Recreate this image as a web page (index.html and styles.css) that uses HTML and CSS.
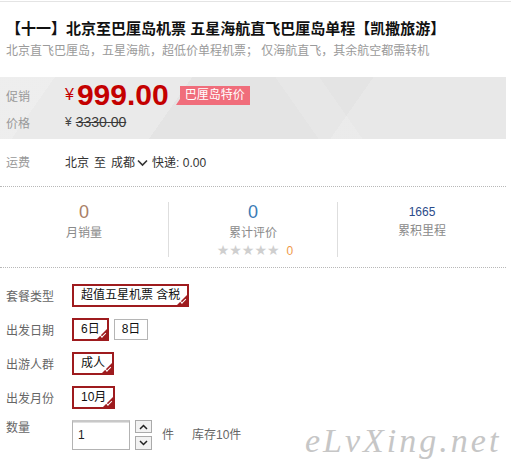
FILE: index.html
```html
<!DOCTYPE html>
<html lang="zh">
<head>
<meta charset="utf-8">
<link rel="stylesheet" href="styles.css">
</head>
<body>
<div class="topline"></div>
<div class="page">
  <h1 class="title">【十一】北京至巴厘岛机票 五星海航直飞巴厘岛单程【凯撒旅游】</h1>
  <p class="sub">北京直飞巴厘岛，五星海航，超低价单程机票； 仅海航直飞，其余航空都需转机</p>

  <div class="pricebox">
    <div class="prow promo">
      <span class="lbl">促销</span>
      <span class="yen">¥</span><span class="big">999.00</span>
      <span class="badge">巴厘岛特价</span>
    </div>
    <div class="prow orig">
      <span class="lbl">价格</span>
      <span class="oyen">¥</span><span class="old">3330.00</span>
    </div>
  </div>

  <div class="ship">
    <span class="lbl">运费</span>
    <span class="city">北京</span><span class="to">至</span><span class="city">成都</span>
    <svg class="chev" width="11" height="8" viewBox="0 0 11 8"><polyline points="1,1.5 5.5,6 10,1.5" fill="none" stroke="#333" stroke-width="1.6"/></svg>
    <span>快递: 0.00</span>
  </div>

  <div class="stats">
    <div class="col">
      <div class="num brown">0</div>
      <div class="slbl">月销量</div>
    </div>
    <div class="col">
      <div class="num blue">0</div>
      <div class="slbl">累计评价</div>
      <div class="stars">★★★★★<span class="zero">0</span></div>
    </div>
    <div class="col">
      <div class="num3">1665</div>
      <div class="slbl3">累积里程</div>
    </div>
  </div>

  <div class="opts">
    <div class="orow">
      <span class="olbl">套餐类型</span>
      <span class="opt sel">超值五星机票 含税</span>
    </div>
    <div class="orow">
      <span class="olbl">出发日期</span>
      <span class="opt sel">6日</span>
      <span class="opt plain">8日</span>
    </div>
    <div class="orow">
      <span class="olbl">出游人群</span>
      <span class="opt sel">成人</span>
    </div>
    <div class="orow">
      <span class="olbl">出发月份</span>
      <span class="opt sel">10月</span>
    </div>
    <div class="qrow">
      <span class="olbl qlbl">数量</span>
      <div class="qinput">1</div>
      <div class="spin">
        <div class="sbtn up"><svg width="9" height="6" viewBox="0 0 9 6"><polyline points="1,5 4.5,1.5 8,5" fill="none" stroke="#222" stroke-width="1.5"/></svg></div>
        <div class="sbtn down"><svg width="9" height="6" viewBox="0 0 9 6"><polyline points="1,1 4.5,4.5 8,1" fill="none" stroke="#222" stroke-width="1.5"/></svg></div>
      </div>
      <span class="unit">件</span>
      <span class="stock">库存10件</span>
    </div>
  </div>
  <div class="watermark">eLvXing.net</div>
</div>
</body>
</html>
```

FILE: styles.css
```css
* { box-sizing: border-box; }
html, body { margin: 0; padding: 0; background: #fff; }
body {
  font-family: "Liberation Sans", "Noto Sans CJK SC", sans-serif;
  font-size: 12px;
  color: #333;
  width: 511px;
  height: 463px;
  overflow: hidden;
}
.topline { height: 1px; margin-top: 1px; background: #e4e4e4; }
.page { width: 506px; position: relative; }

.title {
  margin: 17px 0 0 6px;
  font-size: 15px;
  line-height: 20px;
  font-weight: bold;
  color: #111;
  white-space: nowrap;
}
.sub {
  margin: 4px 0 0 6px;
  font-size: 12px;
  line-height: 16px;
  color: #9a9a9a;
  white-space: nowrap;
}

.pricebox {
  margin-top: 18px;
  height: 62px;
  padding-top: 4px;
  background:
    linear-gradient(125deg, rgba(255,255,255,0.18) 0 10%, rgba(255,255,255,0) 10%),
    linear-gradient(55deg, rgba(255,255,255,0) 0 58%, rgba(255,255,255,0.12) 58% 66%, rgba(255,255,255,0) 66%),
    linear-gradient(125deg, #eaeaea 0 35%, #e4e4e4 35% 68%, #e8e8e8 68%);
}
.prow { display: flex; align-items: center; }
.promo { height: 28px; }
.orig { height: 26px; }
.lbl {
  width: 65px;
  padding-left: 6px;
  color: #999;
  font-size: 12px;
  flex: none;
}
.yen { color: #c40000; font-size: 16px; margin-right: 3px; line-height: 28px; }
.big {
  color: #c40000;
  font-size: 30px;
  font-weight: bold;
  line-height: 28px;
}
.badge {
  position: relative;
  margin-left: 11px;
  height: 19px;
  line-height: 19px;
  padding: 0 5px;
  background: #f06d7b;
  color: #fff;
  font-size: 12px;
}
.badge::before {
  content: "";
  position: absolute;
  left: -4px;
  bottom: 0;
  border-style: solid;
  border-width: 0 0 6px 4px;
  border-color: transparent transparent #f06d7b transparent;
}
.oyen { font-size: 12px; color: #444; margin-right: 4px; }
.old { font-size: 14px; color: #3a3a3a; text-decoration: line-through; }

.ship {
  display: flex;
  align-items: center;
  height: 48px;
  padding-top: 1px;
  border-bottom: 1px dotted #b8b8b8;
  line-height: 24px;
}
.ship .lbl { color: #999; }
.to { margin: 0 5px; }
.chev { margin: 0 4px 0 2px; }

.stats {
  display: flex;
  padding: 15px 0 10px;
  border-bottom: 1px dotted #b8b8b8;
}
.col {
  flex: 1;
  height: 55px;
  text-align: center;
  border-left: 1px solid #dedede;
}
.col:first-child { border-left: none; }
.num { font-size: 18px; line-height: 20px; }
.brown { color: #a98066; }
.blue { color: #3b7bb6; }
.slbl { color: #8a8a8a; font-size: 12px; line-height: 22px; }
.stars {
  color: #cfcfcf;
  font-size: 14px;
  line-height: 12px;
  font-family: "DejaVu Sans", sans-serif;
  padding-left: 4px;
}
.zero { color: #ef9a4a; font-family: "Liberation Sans", sans-serif; font-size: 12px; margin-left: 7px; }
.num3 { font-size: 12px; line-height: 20px; color: #2c4c8a; }
.slbl3 { color: #8a8a8a; font-size: 12px; line-height: 18px; }

.opts { padding-top: 16px; }
.orow { display: flex; align-items: flex-start; height: 23px; margin-bottom: 11px; }
.olbl {
  width: 72px;
  padding-left: 6px;
  padding-top: 4px;
  line-height: 19px;
  color: #666;
  flex: none;
}
.opt {
  position: relative;
  height: 23px;
  line-height: 19px;
  padding: 0 7px;
  color: #111;
  white-space: nowrap;
}
.sel { border: 2px solid #9e1b1e; }
.sel::after {
  content: "";
  position: absolute;
  right: 0;
  bottom: 0;
  border-style: solid;
  border-width: 0 0 10px 10px;
  border-color: transparent transparent #9e1b1e transparent;
}
.sel::before {
  content: "";
  position: absolute;
  right: 1px;
  bottom: 3px;
  width: 5px;
  height: 2px;
  border-left: 1.4px solid #fff;
  border-bottom: 1.4px solid #fff;
  transform: rotate(-45deg);
  z-index: 1;
}
.plain {
  margin-left: 5px;
  margin-top: 1px;
  height: 21px;
  line-height: 19px;
  border: 1px solid #b5b5b5;
}

.qrow { display: flex; align-items: flex-start; margin-top: 2px; }
.qlbl { padding-top: 0; line-height: 16px; }
.qinput {
  width: 58px;
  height: 30px;
  border: 1px solid #b3b3b3;
  border-top: 2px solid #c8c8c8;
  box-shadow: inset 0 1px 0 #e0e0e0;
  padding-left: 5px;
  line-height: 26px;
  color: #222;
}
.spin { margin-left: 5px; display: flex; flex-direction: column; gap: 3px; }
.sbtn {
  width: 17px;
  border: 1px solid #aaa;
  background: #f2f2f2;
  display: flex;
  align-items: center;
  justify-content: center;
}
.up { height: 13px; }
.down { height: 14px; }
.unit { margin-left: 10px; line-height: 30px; color: #666; }
.stock { margin-left: 18px; line-height: 30px; color: #666; }

.watermark {
  position: absolute;
  left: 305px;
  top: 403px;
  font-family: "Liberation Serif", serif;
  font-style: italic;
  font-size: 34px;
  letter-spacing: 3px;
  color: #c6c6c6;
  white-space: nowrap;
}
```
